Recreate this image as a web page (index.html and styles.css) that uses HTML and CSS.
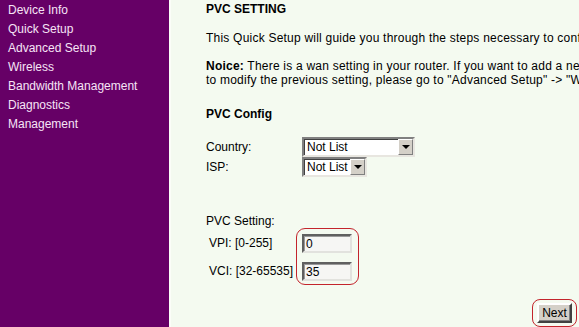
FILE: index.html
```html
<!DOCTYPE html>
<html lang="en">
<head>
   <meta charset="UTF-8">
   <meta name="viewport" content="width=device-width, initial-scale=1.0">
   <title>Quick Setup - PVC Setting</title>
   <link rel="stylesheet" href="styles.css">
</head>
<body>
   <div class="page">
      <div class="menu">
         <a href="#">Device Info</a>
         <a href="#">Quick Setup</a>
         <a href="#">Advanced Setup</a>
         <a href="#">Wireless</a>
         <a href="#">Bandwidth Management</a>
         <a href="#">Diagnostics</a>
         <a href="#">Management</a>
      </div>
      <div class="main">
         <div class="title">PVC SETTING</div>
         <p class="intro">This Quick Setup will guide you through the steps necessary to configure your DSL Router.</p>
         <p class="notice"><b>Noice:</b> There is a wan setting in your router. If you want to add a new connection, please click "Next";<br>to modify the previous setting, please go to "Advanced Setup" -&gt; "WAN".</p>
         <div class="subtitle">PVC Config</div>
         <form action="#" method="POST">
            <div class="field">
               <label>Country:</label>
               <span class="combo combo-wide">
                  <span class="combo-text">Not List</span>
                  <span class="combo-btn"><span class="arrow"></span></span>
               </span>
            </div>
            <div class="field">
               <label>ISP:</label>
               <span class="combo combo-narrow">
                  <span class="combo-text">Not List</span>
                  <span class="combo-btn"><span class="arrow"></span></span>
               </span>
            </div>

            <div class="pvc-title">PVC Setting:</div>
            <div class="pvc">
               <div class="pvc-labels">
                  <span>VPI: [0-255]</span>
                  <span>VCI: [32-65535]</span>
               </div>
               <div class="mark">
                  <input type="text" class="num" id="vpi" value="0">
                  <input type="text" class="num" id="vci" value="35">
               </div>
            </div>

            <div class="actions">
               <div class="mark mark-btn">
                  <input type="submit" class="btn" value="Next">
               </div>
            </div>
         </form>
      </div>
   </div>
</body>
</html>
```

FILE: styles.css
```css
body {
   margin: 0;
   font-family: "Liberation Sans", Arial, sans-serif;
   font-size: 12px;
   background-color: #f4faf0;
   overflow: hidden;
}

.page {
   display: flex;
   height: 327px;
}

.menu {
   width: 171px;
   flex-shrink: 0;
   box-sizing: border-box;
   background: #660066;
   border-right: 2px solid #fbfdf8;
   padding: 1px 0 0 8px;
}

.menu a {
   display: block;
   color: #f6e4f6;
   text-decoration: none;
   line-height: 19px;
}

.main {
   flex: 1;
   min-width: 0;
   padding: 2px 0 0 35px;
   overflow: hidden;
   color: #000000;
}

.title,
.subtitle {
   font-weight: bold;
   line-height: 14px;
}

p {
   margin: 0;
   line-height: 14px;
   letter-spacing: 0.22px;
   white-space: nowrap;
}

.intro {
   margin-top: 15px;
}

.notice {
   margin-top: 14px;
}

.subtitle {
   margin-top: 20px;
}

form {
   margin-top: 16px;
}

.field {
   display: flex;
   align-items: center;
   height: 20px;
}

.field label {
   width: 96px;
   flex-shrink: 0;
}

.combo {
   display: flex;
   align-items: center;
   box-sizing: border-box;
   height: 20px;
   background: #ffffff;
   border: 2px solid;
   border-color: #808080 #e8e6e0 #e8e6e0 #808080;
   box-shadow: inset 1px 1px 0 #404040;
}

.combo-wide {
   width: 113px;
}

.combo-narrow {
   width: 65px;
}

.combo-text {
   flex: 1;
   padding-left: 3px;
   font-size: 12px;
   line-height: 16px;
   white-space: nowrap;
   overflow: hidden;
}

.combo-btn {
   display: flex;
   align-items: center;
   justify-content: center;
   box-sizing: border-box;
   width: 15px;
   height: 16px;
   background: #d4d0c8;
   border: 1px solid;
   border-color: #ffffff #808080 #808080 #ffffff;
}

.arrow {
   width: 0;
   height: 0;
   border-left: 4px solid transparent;
   border-right: 4px solid transparent;
   border-top: 4px solid #000000;
}

.pvc-title {
   margin-top: 37px;
   line-height: 14px;
}

.pvc {
   display: flex;
}

.pvc-labels {
   width: 90px;
   box-sizing: border-box;
   padding: 6px 0 0 3px;
   display: flex;
   flex-direction: column;
   gap: 9px;
}

.pvc-labels span {
   line-height: 19px;
   white-space: nowrap;
}

.mark {
   display: flex;
   flex-direction: column;
   gap: 9px;
   border: 1px solid #c3242c;
   border-radius: 9px;
   padding: 5px 6px 3px 5px;
}

.num {
   width: 50px;
   height: 19px;
   box-sizing: border-box;
   margin: 0;
   padding: 0 0 0 2px;
   font-family: "Liberation Sans", Arial, sans-serif;
   font-size: 12px;
   background: #f6f6f4;
   border: 2px solid;
   border-color: #606060 #e2e2de #e2e2de #606060;
   box-shadow: inset 1px 1px 0 #9a9a9a;
   outline: none;
}

.actions {
   display: flex;
   justify-content: flex-end;
   margin-top: 14px;
   padding-right: 2px;
}

.mark-btn {
   padding: 3px 4px;
   border-radius: 8px;
}

.btn {
   width: 35px;
   height: 20px;
   margin: 0;
   padding: 0;
   font-family: "Liberation Sans", Arial, sans-serif;
   font-size: 12px;
   color: #000000;
   background: #d4d0c8;
   border: 2px solid;
   border-color: #ffffff #404040 #404040 #ffffff;
   box-shadow: inset -1px -1px 0 #808080;
   cursor: pointer;
}
```
